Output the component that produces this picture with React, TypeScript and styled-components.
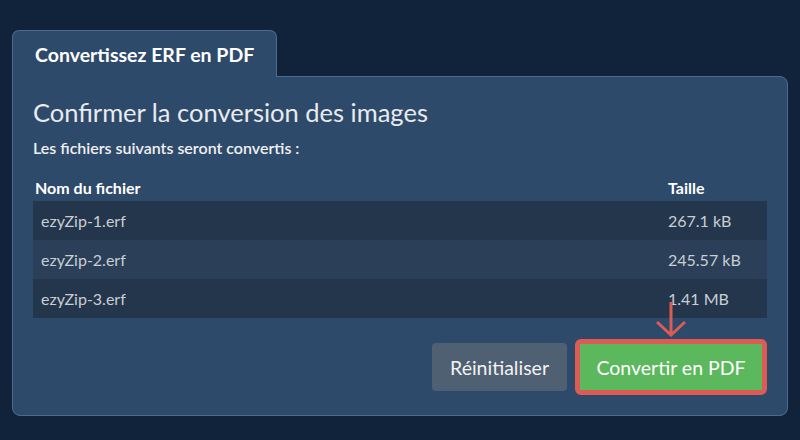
import React from "react";
import styled, { createGlobalStyle } from "styled-components";

const Global = createGlobalStyle`
  html, body { margin: 0; padding: 0; background: #11233a; }
  body { font-family: Lato, "Open Sans", sans-serif; -webkit-font-smoothing: antialiased; }
`;

const Page = styled.div`
  padding: 30px 12px 0 12px;
  box-sizing: border-box;
  width: 800px;
  height: 440px;
`;

const Tab = styled.div`
  position: relative;
  z-index: 1;
  display: inline-flex;
  align-items: center;
  box-sizing: border-box;
  width: 265px;
  height: 47px;
  margin-bottom: -1px;
  padding-left: 22px;
  background: #2e4a6a;
  border: 1px solid #4f6b8b;
  border-bottom: none;
  border-radius: 7px 7px 0 0;
  color: #ffffff;
  font-size: 19.5px;
  font-weight: 700;
`;

const Panel = styled.div`
  box-sizing: border-box;
  height: 340px;
  background: #2e4a6a;
  border: 1px solid #4f6b8b;
  border-radius: 0 8px 8px 8px;
  padding: 20px 20px 20px 20px;
  display: flex;
  flex-direction: column;
`;

const Title = styled.h2`
  margin: 0;
  font-size: 25.5px;
  line-height: 30px;
  font-weight: 400;
  color: #e9ebee;
`;

const Subtitle = styled.p`
  margin: 11px 0 0 0;
  font-size: 16px;
  line-height: 20px;
  font-weight: 600;
  color: #eef0f2;
`;

const Table = styled.table`
  margin-top: 20px;
  width: 100%;
  border-collapse: collapse;
`;

const HeadCell = styled.th<{ $pad: number }>`
  text-align: left;
  font-size: 16px;
  font-weight: 700;
  color: #ffffff;
  padding: 0 0 4px ${(p) => p.$pad}px;
  line-height: 19px;
`;

const Row = styled.tr<{ $alt: boolean }>`
  background: ${(p) => (p.$alt ? "#2b4058" : "#24364b")};
`;

const Cell = styled.td<{ $w?: number }>`
  padding: 10px 8px;
  font-size: 16px;
  line-height: 19px;
  color: #c9ced5;
  width: ${(p) => (p.$w ? `${p.$w}px` : "auto")};
  box-sizing: border-box;
`;

const Actions = styled.div`
  margin-top: auto;
  display: flex;
  justify-content: flex-end;
  align-items: center;
  gap: 8px;
`;

const ResetButton = styled.button`
  height: 48px;
  padding: 0 18px;
  border: none;
  border-radius: 4px;
  background: #4f6072;
  color: #f2f2f2;
  font-family: inherit;
  font-size: 19.5px;
  cursor: pointer;
`;

const Highlight = styled.div`
  position: relative;
  border: 5px solid #dd5b55;
  border-radius: 6px;
  display: flex;
`;

const ConvertButton = styled.button`
  height: 46px;
  width: 182px;
  padding: 0;
  border: none;
  background: #5cb85c;
  color: #ffffff;
  font-family: inherit;
  font-size: 19.5px;
  cursor: pointer;
`;

const Arrow = styled.svg`
  position: absolute;
  left: 50%;
  top: -42px;
  transform: translateX(-50%);
  overflow: visible;
`;

const files = [
  { name: "ezyZip-1.erf", size: "267.1 kB" },
  { name: "ezyZip-2.erf", size: "245.57 kB" },
  { name: "ezyZip-3.erf", size: "1.41 MB" },
];

export default function App() {
  return (
    <>
      <Global />
      <Page>
        <Tab>Convertissez ERF en PDF</Tab>
        <Panel>
          <Title>Confirmer la conversion des images</Title>
          <Subtitle>Les fichiers suivants seront convertis :</Subtitle>
          <Table>
            <thead>
              <tr>
                <HeadCell $pad={2}>Nom du fichier</HeadCell>
                <HeadCell $pad={8}>Taille</HeadCell>
              </tr>
            </thead>
            <tbody>
              {files.map((f, i) => (
                <Row key={f.name} $alt={i % 2 === 1}>
                  <Cell>{f.name}</Cell>
                  <Cell $w={107}>{f.size}</Cell>
                </Row>
              ))}
            </tbody>
          </Table>
          <Actions>
            <ResetButton>Réinitialiser</ResetButton>
            <Highlight>
              <Arrow width="30" height="36" viewBox="0 0 30 36">
                <path
                  d="M15 0 V33 M1 20 L15 33 L29 20"
                  fill="none"
                  stroke="#dd5b55"
                  strokeWidth="3"
                />
              </Arrow>
              <ConvertButton>Convertir en PDF</ConvertButton>
            </Highlight>
          </Actions>
        </Panel>
      </Page>
    </>
  );
}
